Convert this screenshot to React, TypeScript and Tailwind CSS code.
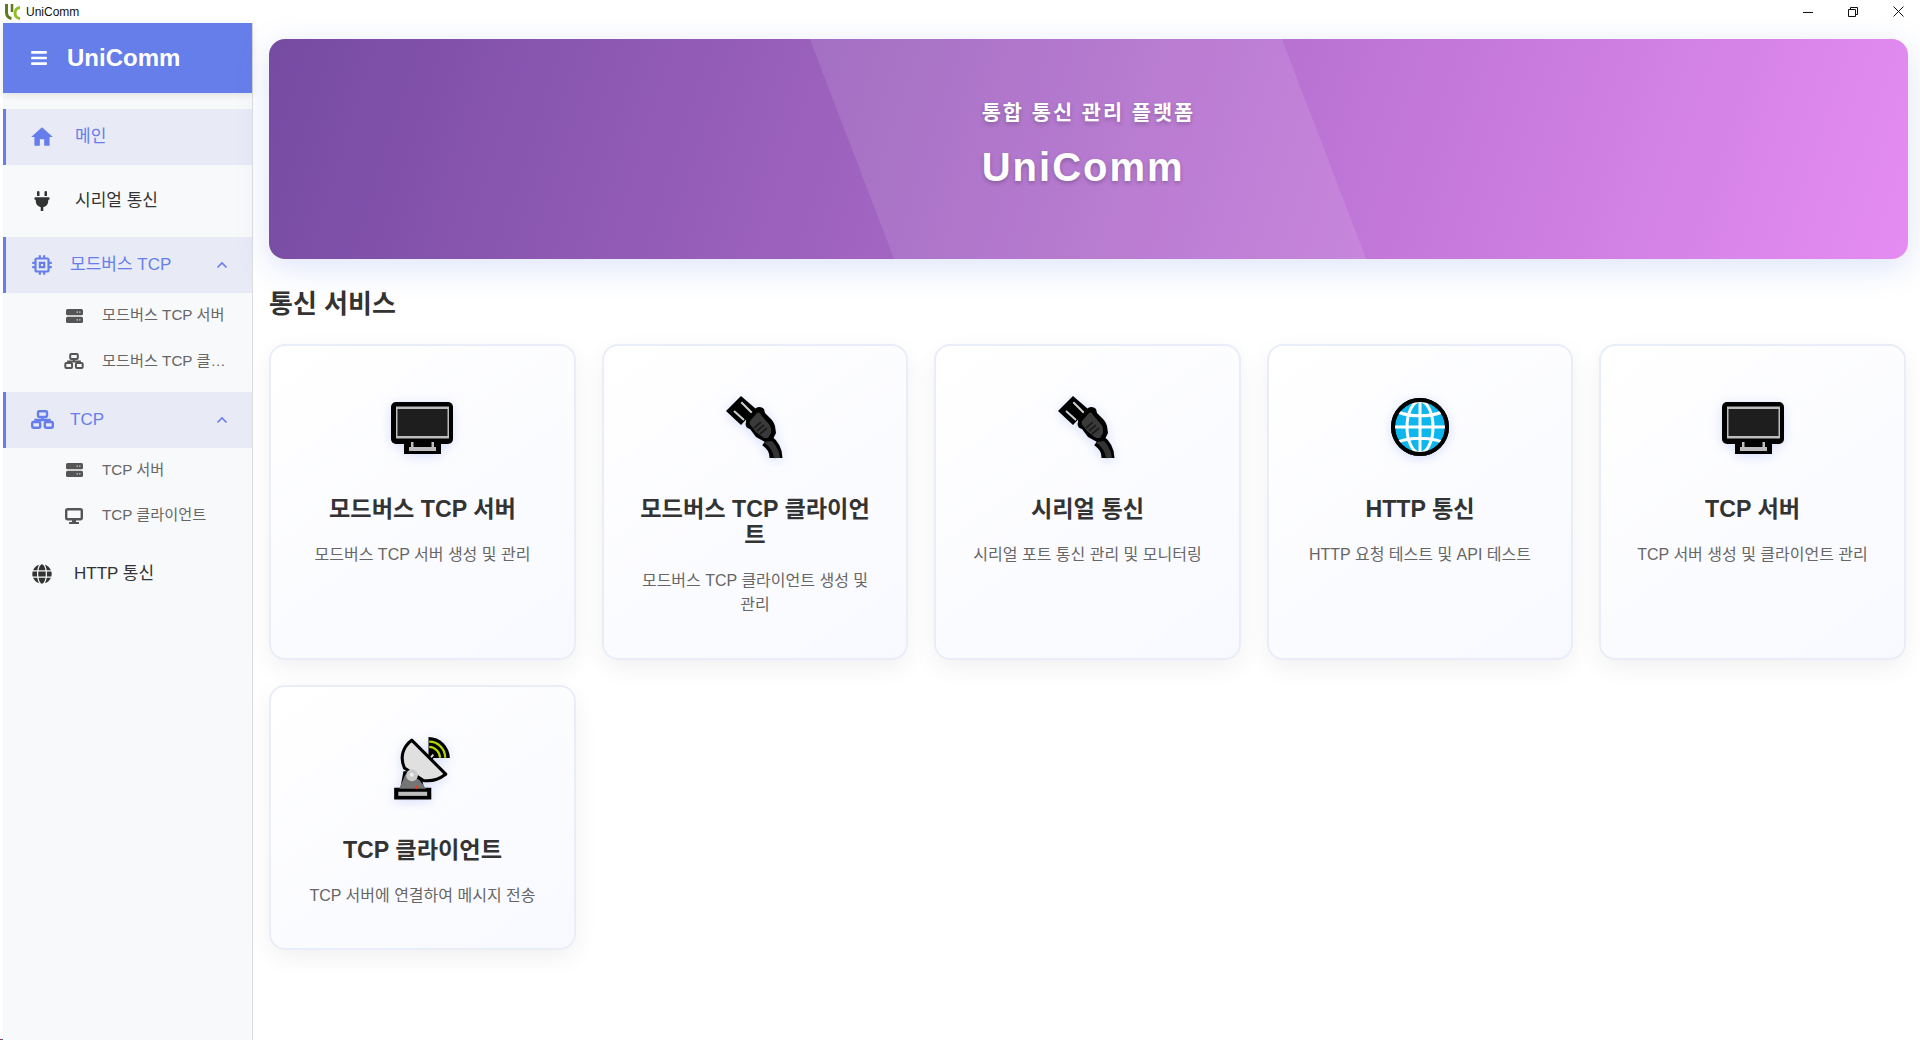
import { FaBars, FaGlobe, FaPlug } from 'react-icons/fa';
import { MdHome, MdMemory } from 'react-icons/md';
import type { ReactNode } from 'react';

const font = { fontFamily: '"Liberation Sans", "Noto Sans CJK KR", sans-serif' };

function Chevron() {
    return (
        <svg viewBox="0 0 12 8" className="w-3 h-2 ml-auto mr-[24px]" fill="none" stroke="#667eea" strokeWidth="1.6">
            <path d="M1.5 6.5 6 2l4.500 4.500" />
        </svg>
    );
}

function LanIcon({ className }: { className: string }) {
    return (
        <svg viewBox="0 0 23 19" className={className} fill="none" stroke="currentColor" strokeWidth="2.4">
            <rect x="7" y="1.200" width="9" height="5.800" rx="1.2" />
            <path d="M11.500 7v3M4.500 12v-2h14v2" />
            <rect x="1.200" y="12" width="8" height="5.800" rx="1.2" />
            <rect x="13.800" y="12" width="8" height="5.800" rx="1.2" />
        </svg>
    );
}

function ServerIcon() {
    return (
        <svg viewBox="0 0 17 14" className="w-[17px] h-3.5">
            <rect width="17" height="6.300" rx="1.600" fill="currentColor" />
            <rect y="7.700" width="17" height="6.300" rx="1.600" fill="currentColor" />
            <path d="M10.500 2.500h1.500v1.300h-1.500zM13 2.500h1.500v1.300H13zM10.500 10.200h1.500v1.300h-1.500zM13 10.200h1.500v1.300H13z" fill="#c9c9c9" />
        </svg>
    );
}

function DesktopIcon() {
    return (
        <svg viewBox="0 0 18 16" className="w-[18px] h-4">
            <rect x="1.200" y="1.200" width="15.600" height="10" rx="1.500" fill="none" stroke="currentColor" strokeWidth="2.400" />
            <rect x="7" y="12" width="4" height="2.200" fill="currentColor" />
            <rect x="4" y="14" width="10" height="2" rx="0.500" fill="currentColor" />
        </svg>
    );
}

function NavItem({ icon, label, active, labelGap }: { icon: ReactNode; label: string; active?: boolean; labelGap?: string }) {
    return (
        <div
            className={
                active
                    ? 'h-14 mb-2 flex items-center bg-[#e8eaf6] border-l-[3px] border-[#667eea] text-[#667eea] pl-[23px]'
                    : 'h-14 mb-2 flex items-center text-[#333333] pl-[26px]'
            }
        >
            <span className="w-[26px] flex justify-center text-[26px]">{icon}</span>
            <span className={`${labelGap ?? 'ml-[20px]'} text-[17px]`}>{label}</span>
        </div>
    );
}

function NavGroup({ icon, label }: { icon: ReactNode; label: string }) {
    return (
        <div className="h-14 flex items-center bg-[#e8eaf6] border-l-[3px] border-[#667eea] text-[#667eea] pl-[23px]">
            <span className="w-[26px] flex justify-center text-[26px]">{icon}</span>
            <span className="ml-[15px] text-[17px]">{label}</span>
            <Chevron />
        </div>
    );
}

function SubItem({ icon, label }: { icon: ReactNode; label: string }) {
    return (
        <div className="h-[45.5px] flex items-center text-[#666666] pl-[59px] pr-[26px]">
            <span className="w-6 flex justify-center text-[#555555] shrink-0">{icon}</span>
            <span className="ml-[16px] text-[15.2px] truncate">{label}</span>
        </div>
    );
}

function MonitorIcon() {
    return (
        <svg viewBox="0 0 64 64" className="w-16 h-16">
            <rect x="14" y="46" width="37" height="12" fill="#000" />
            <rect x="1" y="6" width="62" height="42" rx="5" fill="#000" />
            <rect x="6" y="10.5" width="53" height="32" fill="#bdbdbd" />
            <rect x="7.5" y="13" width="50" height="27" fill="#1e1e1e" />
            <rect x="19" y="51" width="27" height="4" fill="#bdbdbd" />
            <path d="M21 46h2.5v6H21zM41.500 46H44v6h-2.500z" fill="#bdbdbd" />
        </svg>
    );
}

function PlugIcon() {
    return (
        <svg viewBox="0 0 64 64" className="w-16 h-16">
            <path d="M3 15 18 0 33 13 18 29Z" fill="#000" />
            <path d="m18.300 6.300 11 11M11 15l10 9" stroke="#cfcfcf" strokeWidth="2" fill="none" />
            <path d="M43 44c7 5 10 10 10 18" stroke="#000" strokeWidth="13" fill="none" />
            <path d="M43 44c7 5 10 10 11 18" stroke="#333" strokeWidth="6" fill="none" />
            <path d="M23 23 33 12c3-2 6-1 8 1l1 4 5 5c3 3 4 5 5 8l1 7-4 8-7 1-9-5-6-8c-4-1-5-4-4-7Z" fill="#000" />
            <path d="M27 25 34 17c2-1 3 0 4 2l6 7c3 3 4 5 4 8v3l-3 5-4 0-8-6-4-5c-2-2-3-4-2-6Z" fill="#3a3a3a" />
            <path d="m31 32 7-6m-4 9 7-6m-4 9 7-6" stroke="#1c1c1c" strokeWidth="1.800" fill="none" />
        </svg>
    );
}

function GlobeIcon() {
    return (
        <svg viewBox="0 0 64 64" className="w-16 h-16">
            <circle cx="32" cy="31" r="27" fill="#0db7ed" stroke="#000" strokeWidth="4" />
            <g fill="none" stroke="#fff" strokeWidth="3">
                <ellipse cx="32" cy="31" rx="13" ry="26" />
                <path d="M32 5v52M5 31h54M10 16c12 5 32 5 44 0M10 46c12-5 32-5 44 0" />
            </g>
            <circle cx="32" cy="31" r="27" fill="none" stroke="#000" strokeWidth="4" />
        </svg>
    );
}

function DishIcon() {
    return (
        <svg viewBox="0 0 64 64" className="w-[66px] h-[66px] -translate-y-[2px]">
            <path d="M38.300 23.300V3A20.500 20.500 0 0 1 59 23.300Z" fill="#000" />
            <path d="M39 12.500A11 11 0 0 1 49.500 23M39 7.500A15.500 15.500 0 0 1 54.500 23" stroke="#b3d400" strokeWidth="2.200" fill="none" />
            <path d="m32 32 11-12" stroke="#000" strokeWidth="5" />
            <path d="m33 31 10-11" stroke="#d9d9d9" strokeWidth="2" />
            <path d="M5 52h6l3-16h16l4 16h7v11.500H5Z" fill="#000" />
            <path d="M16 39 10 53h26l-7-9Z" fill="#757575" />
            <rect x="9" y="56" width="28" height="4" fill="#bdbdbd" />
            <path d="M22 6 55 39C47 45 39 46 33 45L15 33C10 22 14 12 22 6Z" fill="#e0e0e0" stroke="#000" strokeWidth="3" strokeLinejoin="round" />
            <circle cx="22.300" cy="40" r="5.700" fill="#c9c9c9" />
            <circle cx="22" cy="39.500" r="2" fill="#eeeeee" />
            <circle cx="26.700" cy="51.700" r="1.700" fill="#e8401c" />
        </svg>
    );
}

function ServiceCard({ icon, title, desc }: { icon: ReactNode; title: string; desc: string }) {
    return (
        <div className="px-8 pt-10 pb-[40.5px] rounded-2xl border-2 border-[#e9edf8] bg-linear-[145deg] from-white to-[#f8f9ff] shadow-[0_8px_24px_rgba(0,0,0,0.06)] text-center">
            <div className="h-[84px] mb-[26px] flex items-center justify-center drop-shadow-[0_2px_6px_rgba(102,126,234,0.25)]">{icon}</div>
            <h3 className="text-[23.2px] leading-[26px] font-bold text-[#333333] mb-[21px]">{title}</h3>
            <p className="text-base leading-[24.3px] text-[#666666]">{desc}</p>
        </div>
    );
}

const services = [
    { icon: <MonitorIcon />, title: '모드버스 TCP 서버', desc: '모드버스 TCP 서버 생성 및 관리' },
    { icon: <PlugIcon />, title: '모드버스 TCP 클라이언트', desc: '모드버스 TCP 클라이언트 생성 및 관리' },
    { icon: <PlugIcon />, title: '시리얼 통신', desc: '시리얼 포트 통신 관리 및 모니터링' },
    { icon: <GlobeIcon />, title: 'HTTP 통신', desc: 'HTTP 요청 테스트 및 API 테스트' },
    { icon: <MonitorIcon />, title: 'TCP 서버', desc: 'TCP 서버 생성 및 클라이언트 관리' },
    { icon: <DishIcon />, title: 'TCP 클라이언트', desc: 'TCP 서버에 연결하여 메시지 전송' },
];

export default function App() {
    return (
        <div className="relative h-screen flex flex-col bg-white overflow-hidden" style={font}>
            {/* Title bar */}
            <div className="h-[23px] shrink-0 flex items-center">
                <svg viewBox="0 0 17 17" className="w-[17px] h-[17px] ml-[4px]" fill="none">
                    <path d="M2.500 1v8c0 4 2 6 5 6.500" stroke="#5d7a1c" strokeWidth="3" />
                    <path d="M8 1v8" stroke="#5d7a1c" strokeWidth="2.500" />
                    <path d="M16 4.500A5.500 5.500 0 0 0 11 10c0 3 2 5.500 5 5.500" stroke="#8fbf1f" strokeWidth="3" />
                </svg>
                <span className="ml-[5px] text-xs text-[#111111]">UniComm</span>
                <div className="ml-auto flex items-center text-[#111111]">
                    <svg viewBox="0 0 10 10" className="w-2.5 h-2.5 mr-[35px]" stroke="currentColor" fill="none">
                        <path d="M0 5.500h10" />
                    </svg>
                    <svg viewBox="0 0 10 10" className="w-2.5 h-2.5 mr-[35px]" stroke="currentColor" fill="none">
                        <path d="M.5 2.500h7v7h-7zM2.500 2.500v-2h7v7h-2" />
                    </svg>
                    <svg viewBox="0 0 11 11" className="w-[11px] h-[11px] mr-[16px]" stroke="currentColor" fill="none">
                        <path d="m.5.5 10 10m0-10-10 10" />
                    </svg>
                </div>
            </div>

            <div className="flex-1 min-h-0 flex pl-[3px]">
                {/* Sidebar */}
                <aside className="w-[250px] shrink-0 bg-[#f8f9fa] border-r border-[#dddddd]">
                    <div className="h-[70px] bg-[#667eea] text-white flex items-center pl-[27px] shadow-[0_2px_8px_rgba(0,0,0,0.1)]">
                        <FaBars className="text-[18px]" />
                        <span className="ml-[19px] text-2xl font-bold">UniComm</span>
                    </div>
                    <nav className="pt-4">
                        <NavItem active icon={<MdHome />} label="메인" />
                        <NavItem icon={<FaPlug className="text-[20px]" />} label="시리얼 통신" />
                        <NavGroup icon={<MdMemory />} label="모드버스 TCP" />
                        <SubItem icon={<ServerIcon />} label="모드버스 TCP 서버" />
                        <SubItem icon={<LanIcon className="w-5 h-4" />} label="모드버스 TCP 클라이언트" />
                        <div className="h-[7.5px]" />
                        <NavGroup icon={<LanIcon className="w-[23px] h-[19px]" />} label="TCP" />
                        <SubItem icon={<ServerIcon />} label="TCP 서버" />
                        <SubItem icon={<DesktopIcon />} label="TCP 클라이언트" />
                        <div className="h-[7.5px]" />
                        <NavItem icon={<FaGlobe className="text-[20px]" />} label="HTTP 통신" labelGap="ml-[19px]" />
                    </nav>
                </aside>

                {/* Main */}
                <main className="flex-1 min-w-0 pt-4 pl-4 pr-3">
                    <div className="relative h-[220px] rounded-2xl overflow-hidden bg-linear-[108deg] from-[#764ba2] to-[#e58cf2] flex items-center justify-center pb-[9px] shadow-[0_8px_32px_rgba(102,126,234,0.22)]">
                        <div className="absolute inset-y-0 left-[583px] w-[472px] skew-x-[21deg] bg-white/[0.1]" />
                        <div className="relative text-white [text-shadow:0_2px_4px_rgba(0,0,0,0.25)]">
                            <p className="text-[20.8px] leading-[29px] font-bold tracking-[2px] mb-[16.5px]">통합 통신 관리 플랫폼</p>
                            <h1 className="text-[40px] leading-[48px] font-bold tracking-[2px]">UniComm</h1>
                        </div>
                    </div>
                    <h2 className="mt-[31px] text-[26px] leading-[29px] font-bold text-[#333333] mb-[25px]">통신 서비스</h2>
                    <div className="grid grid-cols-5 gap-x-[25.6px] gap-y-[24.5px] mr-[2px]">
                        {services.map((s) => (
                            <ServiceCard key={s.title} icon={s.icon} title={s.title} desc={s.desc} />
                        ))}
                    </div>
                </main>
            </div>

            {/* stray pixels at the window corner */}
            <div className="absolute left-0 bottom-0 flex h-px">
                <span className="w-px bg-[#c62828]" />
                <span className="w-px bg-[#2e7d32]" />
                <span className="w-px bg-[#1565c0]" />
            </div>
        </div>
    );
}
